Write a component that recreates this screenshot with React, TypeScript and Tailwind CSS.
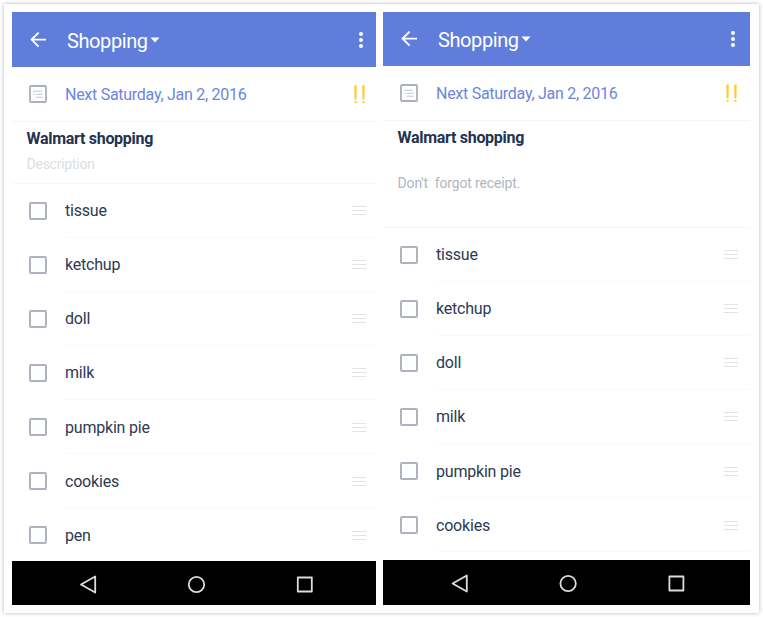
import React from "react";

type Variant = "left" | "right";

function BackIcon() {
  return (
    <svg width="18" height="18" viewBox="0 0 18 18" fill="none" stroke="#fff" strokeWidth="1.9">
      <path d="M16 8.6H2M8.6 1.6L1.6 8.6l7 7" />
    </svg>
  );
}

function NoteIcon() {
  return (
    <svg width="18" height="18" viewBox="0 0 18 18" fill="none">
      <rect x="1" y="1" width="16" height="16" rx="1" stroke="#a9b0bb" strokeWidth="1.8" />
      <path d="M4 6.2H13M6.8 9.2H14M6.8 12.2H14M4 9.2H5.4" stroke="#c3c8d0" strokeWidth="1.1" />
    </svg>
  );
}

function Priority() {
  return (
    <svg width="12" height="19" viewBox="0 0 12 19" fill="#fccb35">
      <path d="M0.3 0.5h2.5l-.3 14H.6zM8.2 0.5h2.5l-.3 14H8.5z" />
      <rect x="0.5" y="16" width="2.1" height="2" />
      <rect x="8.4" y="16" width="2.1" height="2" />
    </svg>
  );
}

function Row({ label, last, variant }: { label: string; last: boolean; variant: Variant }) {
  return (
    <div
      className={`relative flex h-[54.15px] shrink-0 items-center pl-[17px] ${variant === "left" ? "pr-[10px]" : "pr-[12px]"}`}
    >
      <div className="size-[18px] shrink-0 rounded-[2px] border-2 border-[#adb4c0]" />
      <span className="ml-[18px] flex-1 pt-px text-[16px] leading-5 tracking-[-0.2px] text-[#2c3a55]">{label}</span>
      <div className="flex w-[14px] flex-col gap-[3px]">
        <div className="h-px bg-[#e2e3e6]" />
        <div className="h-px bg-[#e2e3e6]" />
        <div className="h-px bg-[#e2e3e6]" />
      </div>
      {!last && <div className="absolute bottom-0 left-[53px] right-0 h-px bg-[#f9f9fa]" />}
    </div>
  );
}

function NavBar({ variant }: { variant: Variant }) {
  return (
    <div className={`relative z-10 shrink-0 bg-black ${variant === "left" ? "h-[44px]" : "h-[45px]"}`}>
      <svg
        className="block h-full w-full"
        viewBox={variant === "left" ? "0 0 364 44" : "-0.6 0 367 45"}
        fill="none"
        stroke="#dcdcdc"
        strokeWidth="1.8"
        strokeLinejoin="round"
      >
        <path d="M83.2 15.5V31.5L69 23.5z" />
        <circle cx="184.5" cy="23.5" r="7.7" />
        <rect x="285.8" y="16.5" width="14" height="14" />
      </svg>
    </div>
  );
}

function Phone({ variant, items }: { variant: Variant; items: string[] }) {
  const left = variant === "left";
  return (
    <section className={`flex h-[593px] flex-col overflow-hidden bg-white ${left ? "w-[364px]" : "w-[367px]"}`}>
      <header
        className={`flex shrink-0 items-center bg-[#607ddc] pl-[18px] text-white ${left ? "h-[55px] pr-[13px] pt-px" : "h-[54px] pr-[15px]"}`}
      >
        <BackIcon />
        <span className="ml-[19px] pt-[2px] text-[20px] leading-6 tracking-[-0.4px]">Shopping</span>
        <svg className="ml-[2px]" width="10" height="6" viewBox="0 0 10 6" fill="#fff">
          <path d="M0.5 0.5h9L5 5.5z" />
        </svg>
        <svg className="ml-auto" width="4" height="16" viewBox="0 0 4 16" fill="#fff">
          <circle cx="2" cy="2" r="2" />
          <circle cx="2" cy="8" r="2" />
          <circle cx="2" cy="14" r="2" />
        </svg>
      </header>
      <div
        className={`flex h-[55px] shrink-0 items-center border-b border-[#f4f4f6] pl-[17px] ${left ? "pr-[10px]" : "pr-[12px]"}`}
      >
        <NoteIcon />
        <span className="ml-[18px] flex-1 pt-px text-[16px] leading-5 tracking-[-0.27px] text-[#6b86de]">
          Next Saturday, Jan 2, 2016
        </span>
        <Priority />
      </div>
      <div className={`shrink-0 ${left ? "h-[61.5px]" : "h-[106.5px]"}`}>
        <div className="h-full border-b border-[#f7f7f8] pl-[14.5px] pt-[7px]">
          <h2 className="text-[16px] font-bold leading-5 tracking-[-0.29px] text-[#22324f]">Walmart shopping</h2>
          {left ? (
            <p className="mt-[6px] text-[14px] leading-[18px] tracking-[-0.24px] text-[#dcdde0]">Description</p>
          ) : (
            <p className="mt-[26px] whitespace-pre text-[14px] leading-[18px] tracking-[-0.14px] text-[#b0b5bf]">{"Don't  forgot receipt."}</p>
          )}
        </div>
      </div>
      <div className="min-h-0 flex-1">
        {items.map((item, i) => (
          <Row key={item} label={item} variant={variant} last={left && i === items.length - 1} />
        ))}
      </div>
      <NavBar variant={variant} />
    </section>
  );
}

const ITEMS = ["tissue", "ketchup", "doll", "milk", "pumpkin pie", "cookies", "pen"];

export default function App() {
  return (
    <div className="h-[617px] w-[763px] bg-white p-[4px] font-[Roboto,sans-serif]">
      <main className="flex h-[609px] w-[755px] gap-[7px] bg-white p-[8px] shadow-[0_0_4px_rgba(0,0,0,0.3)]">
        <Phone variant="left" items={ITEMS} />
        <Phone variant="right" items={ITEMS.slice(0, 6)} />
      </main>
    </div>
  );
}
